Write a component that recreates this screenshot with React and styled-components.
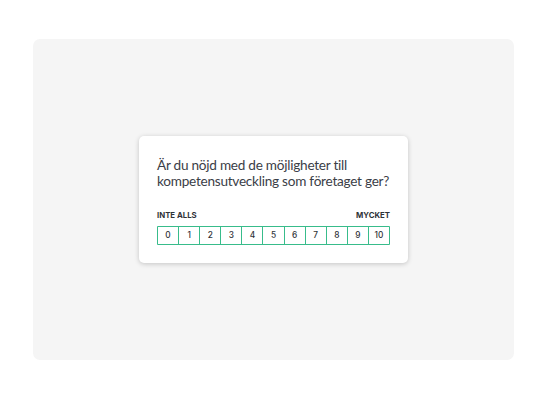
import React from "react";
import styled, { createGlobalStyle } from "styled-components";

const Global = createGlobalStyle`
  html, body { margin: 0; padding: 0; background: #ffffff; }
  body { font-family: Lato, "Noto Sans", sans-serif; }
`;

const Page = styled.div`
  width: 547px;
  height: 400px;
  box-sizing: border-box;
  padding: 39px 33px 40px 33px;
`;

const Stage = styled.div`
  height: 100%;
  background: #f5f5f5;
  border-radius: 7px;
  display: flex;
  align-items: center;
  justify-content: center;
`;

const Card = styled.div`
  width: 269px;
  box-sizing: border-box;
  background: #ffffff;
  border-radius: 5px;
  box-shadow: 0 1px 5px rgba(0, 0, 0, 0.2);
  padding: 21px 18px 18px 18px;
  margin-top: -1px;
`;

const Question = styled.p`
  margin: 0 0 21px 0;
  font-size: 13.6px;
  line-height: 16px;
  letter-spacing: -0.25px;
  color: #3b4047;
`;

const Labels = styled.div`
  display: flex;
  justify-content: space-between;
  font-family: Inter, sans-serif;
  font-size: 7.8px;
  line-height: 10px;
  font-weight: 700;
  color: #2f3338;
  margin-bottom: 6px;
`;

const Scale = styled.div`
  display: grid;
  grid-template-columns: repeat(11, 1fr);
  gap: 1px;
  padding: 1px;
  background: #38bc8b;
  border-radius: 1px;
  height: 19px;
  box-sizing: border-box;
`;

const Cell = styled.div`
  display: flex;
  align-items: center;
  justify-content: center;
  background: #ffffff;
  font-family: Inter, sans-serif;
  font-size: 8.3px;
  font-weight: 500;
  color: #2f3338;
`;

export default function App() {
  const nums = Array.from({ length: 11 }, (_, i) => i);
  return (
    <>
      <Global />
      <Page>
        <Stage>
          <Card>
            <Question>
              Är du nöjd med de möjligheter till kompetensutveckling som företaget ger?
            </Question>
            <Labels>
              <span>INTE ALLS</span>
              <span>MYCKET</span>
            </Labels>
            <Scale>
              {nums.map((n) => (
                <Cell key={n}>{n}</Cell>
              ))}
            </Scale>
          </Card>
        </Stage>
      </Page>
    </>
  );
}
